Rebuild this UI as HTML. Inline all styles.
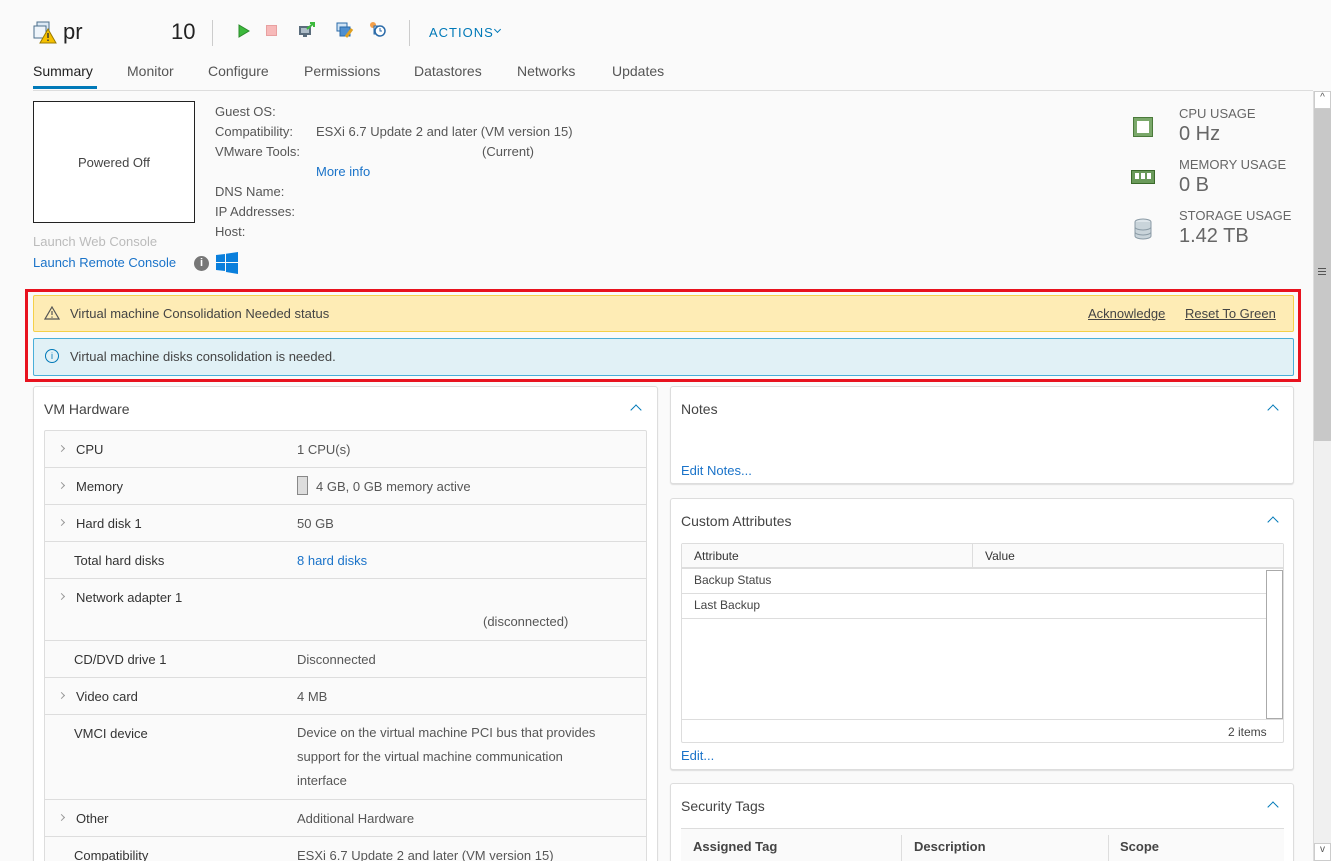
<!DOCTYPE html>
<html style="overflow:hidden;height:861px"><head><meta charset="utf-8"><style>
*{box-sizing:border-box;margin:0;padding:0}
body{width:1331px;height:861px;overflow:hidden;background:#fafafa;font-family:"Liberation Sans",sans-serif;font-size:13px;color:#565656;position:relative}
.a{position:absolute;white-space:nowrap}
.link{color:#1a73c9 !important}
.card{position:absolute;background:#fff;border:1px solid #ddd;border-radius:3px;box-shadow:0 1px 1px #ddd}
.ttl{position:absolute;left:10px;font-size:14px;color:#444}
.chev{position:absolute;width:8px;height:8px;border-left:1.5px solid #0079b8;border-top:1.5px solid #0079b8;transform:rotate(45deg)}
.row{position:absolute;left:0;right:0;border-bottom:1px solid #ddd}
.row .k{position:absolute;left:29px;top:11px;color:#333}
.row .v{position:absolute;left:252px;top:11px;color:#565656}
.row .x{position:absolute;left:14px;top:15px;width:5px;height:5px;border-right:1px solid #999;border-top:1px solid #999;transform:rotate(45deg)}
.tab{position:absolute;top:63px;font-size:14px;color:#555}
</style></head><body>
<svg class="a" style="left:33px;top:20px" width="24" height="24" viewBox="0 0 24 24"><rect x="4" y="2" width="12" height="10" fill="#dce9f5" stroke="#4c6f8c"/><rect x="1" y="6" width="12" height="12" fill="#eef4fa" stroke="#4c6f8c"/><path d="M15 9 L23 23 H7 Z" fill="#f5c000" stroke="#9a7b00"/><rect x="14.3" y="13" width="1.4" height="5" fill="#333"/><rect x="14.3" y="19.5" width="1.4" height="1.5" fill="#333"/></svg>
<div class="a" style="left:63px;top:19px;font-size:22px;color:#222">pr</div>
<div class="a" style="left:171px;top:19px;font-size:22px;color:#222">10</div>
<div class="a" style="left:212px;top:20px;width:1px;height:26px;background:#ccc"></div>
<svg class="a" style="left:238px;top:24px" width="12" height="14"><path d="M1 1 L11 7 L1 13Z" fill="#3cb93c" stroke="#2a8a2a"/></svg>
<div class="a" style="left:266px;top:25px;width:11px;height:11px;background:#f7b9b9;border:1px solid #e8a0a0"></div>
<svg class="a" style="left:298px;top:22px" width="18" height="16"><rect x="1" y="4" width="12" height="9" fill="#5a6c7c"/><rect x="3" y="6" width="8" height="5" fill="#aebcc8"/><path d="M9 7 L16 1 M12 1 H16 V5" stroke="#3cb93c" stroke-width="2" fill="none"/><rect x="5" y="13" width="4" height="2" fill="#5a6c7c"/></svg>
<svg class="a" style="left:336px;top:22px" width="18" height="17"><rect x="1" y="1" width="10" height="8" fill="#cfe3f5" stroke="#2a6aa8"/><rect x="4" y="5" width="10" height="9" fill="#4f8fcf" stroke="#2a6aa8"/><path d="M10 15 L16 7" stroke="#e0a020" stroke-width="3"/></svg>
<svg class="a" style="left:369px;top:21px" width="18" height="17"><circle cx="4" cy="4" r="3" fill="#f5a04a"/><rect x="5" y="5" width="8" height="8" fill="#cfe3f5" stroke="#2a6aa8"/><circle cx="11" cy="10" r="5" fill="#fff" stroke="#2a6aa8" stroke-width="1.5"/><path d="M11 7 V10 H13" stroke="#2a6aa8" fill="none"/></svg>
<div class="a" style="left:409px;top:20px;width:1px;height:26px;background:#ccc"></div>
<div class="a" style="left:429px;top:25px;font-size:13px;letter-spacing:1px;color:#0079b8">ACTIONS</div>
<div class="a" style="left:495px;top:27px;width:5px;height:5px;border-right:1.5px solid #0079b8;border-bottom:1.5px solid #0079b8;transform:rotate(45deg)"></div>
<div class="tab" style="left:33px;color:#222">Summary</div>
<div class="a" style="left:33px;top:86px;width:64px;height:3px;background:#0079b8"></div>
<div class="tab" style="left:127px">Monitor</div>
<div class="tab" style="left:208px">Configure</div>
<div class="tab" style="left:304px">Permissions</div>
<div class="tab" style="left:414px">Datastores</div>
<div class="tab" style="left:517px">Networks</div>
<div class="tab" style="left:612px">Updates</div>
<div class="a" style="left:33px;top:90px;width:1280px;height:1px;background:#ddd"></div>
<div class="a" style="left:1313px;top:91px;width:18px;height:770px;background:#f0f0f0;border-left:1px solid #ddd"></div>
<div class="a" style="left:1314px;top:109px;width:17px;height:332px;background:#c8c8c8"></div>
<div class="a" style="left:1314px;top:91px;width:17px;height:18px;background:#fff;border:1px solid #ccc;text-align:center;font-size:10px">^</div>
<div class="a" style="left:1314px;top:843px;width:17px;height:18px;background:#fff;border:1px solid #ccc;text-align:center;font-size:10px">v</div>
<div class="a" style="left:1318px;top:268px;width:8px;height:1px;background:#555;box-shadow:0 3px #555,0 6px #555"></div>
<div class="a" style="left:33px;top:101px;width:162px;height:122px;border:1px solid #222;background:#fff"></div>
<div class="a" style="left:33px;top:155px;width:162px;text-align:center;color:#444">Powered Off</div>
<div class="a" style="left:33px;top:234px;color:#bbb">Launch Web Console</div>
<div class="a link" style="left:33px;top:255px">Launch Remote Console</div>
<div class="a" style="left:194px;top:256px;width:15px;height:15px;border-radius:50%;background:#777;color:#fff;font-size:11px;font-weight:bold;text-align:center;line-height:15px">i</div>
<svg class="a" style="left:216px;top:252px" width="22" height="22"><path d="M0 3 L9 2 V10 H0Z M10 1.8 L22 0 V10 H10Z M0 11 H9 V19 L0 18Z M10 11 H22 V22 L10 20Z" fill="#0a7fdc"/></svg>
<div class="a" style="left:215px;top:104px">Guest OS:</div>
<div class="a" style="left:215px;top:124px">Compatibility:</div>
<div class="a" style="left:316px;top:124px">ESXi 6.7 Update 2 and later (VM version 15)</div>
<div class="a" style="left:215px;top:144px">VMware Tools:</div>
<div class="a" style="left:482px;top:144px">(Current)</div>
<div class="a link" style="left:316px;top:164px">More info</div>
<div class="a" style="left:215px;top:184px">DNS Name:</div>
<div class="a" style="left:215px;top:204px">IP Addresses:</div>
<div class="a" style="left:215px;top:224px">Host:</div>
<div class="a" style="left:1133px;top:117px;width:20px;height:20px;background:#7aa86a;border:1px solid #4a7a3a"></div>
<div class="a" style="left:1137px;top:121px;width:12px;height:12px;background:#fff"></div>
<div class="a" style="left:1131px;top:170px;width:24px;height:14px;background:#6a9a5a;border:1px solid #3a6a2a"></div>
<div class="a" style="left:1135px;top:173px;width:4px;height:6px;background:#fff;box-shadow:6px 0 #fff,12px 0 #fff"></div>
<svg class="a" style="left:1133px;top:218px" width="20" height="22"><ellipse cx="10" cy="4" rx="8" ry="3" fill="#dde5ea" stroke="#8a9aa5"/><path d="M2 4 V18 A8 3 0 0 0 18 18 V4" fill="#c9d4da" stroke="#8a9aa5"/><path d="M2 9 A8 3 0 0 0 18 9 M2 14 A8 3 0 0 0 18 14" fill="none" stroke="#8a9aa5"/></svg>
<div class="a" style="left:1179px;top:106px;color:#666">CPU USAGE</div>
<div class="a" style="left:1179px;top:123px;font-size:20px;color:#666">0 Hz</div>
<div class="a" style="left:1179px;top:157px;color:#666">MEMORY USAGE</div>
<div class="a" style="left:1179px;top:174px;font-size:20px;color:#666">0 B</div>
<div class="a" style="left:1179px;top:208px;color:#666">STORAGE USAGE</div>
<div class="a" style="left:1179px;top:225px;font-size:20px;color:#666">1.42 TB</div>
<div class="a" style="left:25px;top:289px;width:1276px;height:93px;border:3px solid #e8121f"></div>
<div class="a" style="left:33px;top:295px;width:1261px;height:37px;background:#feecb5;border:1px solid #f5d04a;border-radius:2px"></div>
<svg class="a" style="left:44px;top:306px" width="16" height="14"><path d="M8 1 L15 13 H1Z" fill="none" stroke="#555" stroke-width="1.2"/><path d="M8 5 V9 M8 10.5 V11.8" stroke="#555" stroke-width="1.2"/></svg>
<div class="a" style="left:70px;top:306px;color:#444">Virtual machine Consolidation Needed status</div>
<div class="a" style="left:1088px;top:306px;color:#444;text-decoration:underline">Acknowledge</div>
<div class="a" style="left:1185px;top:306px;color:#444;text-decoration:underline">Reset To Green</div>
<div class="a" style="left:33px;top:338px;width:1261px;height:38px;background:#e1f1f6;border:1px solid #49afd9;border-radius:2px"></div>
<div class="a" style="left:45px;top:349px;width:14px;height:14px;border:1.3px solid #0079b8;border-radius:50%;color:#0079b8;font-size:9px;text-align:center;line-height:12px">i</div>
<div class="a" style="left:70px;top:349px;color:#444">Virtual machine disks consolidation is needed.</div>
<div class="card" style="left:33px;top:386px;width:625px;height:480px">
 <div class="ttl" style="top:14px">VM Hardware</div>
 <div class="chev" style="left:598px;top:19px"></div>
 <div class="a" style="left:10px;top:43px;width:603px;height:440px;background:#fafafa;border:1px solid #ddd;border-radius:2px">
  <div class="row" style="top:0;height:37px"><i class="x"></i><span class="k a" style="left:31px">CPU</span><span class="v">1 CPU(s)</span></div>
  <div class="row" style="top:37px;height:37px"><i class="x"></i><span class="k a" style="left:31px">Memory</span><span class="a" style="left:252px;top:8px;width:11px;height:19px;background:#ddd;border:1px solid #888"></span><span class="v" style="left:271px">4 GB, 0 GB memory active</span></div>
  <div class="row" style="top:74px;height:37px"><i class="x"></i><span class="k a" style="left:31px">Hard disk 1</span><span class="v">50 GB</span></div>
  <div class="row" style="top:111px;height:37px"><span class="k">Total hard disks</span><span class="v link">8 hard disks</span></div>
  <div class="row" style="top:148px;height:62px"><i class="x"></i><span class="k a" style="left:31px">Network adapter 1</span><span class="a" style="left:438px;top:35px">(disconnected)</span></div>
  <div class="row" style="top:210px;height:37px"><span class="k">CD/DVD drive 1</span><span class="v">Disconnected</span></div>
  <div class="row" style="top:247px;height:37px"><i class="x"></i><span class="k a" style="left:31px">Video card</span><span class="v">4 MB</span></div>
  <div class="row" style="top:284px;height:85px"><span class="k">VMCI device</span><span class="v" style="line-height:24px;top:6px">Device on the virtual machine PCI bus that provides<br>support for the virtual machine communication<br>interface</span></div>
  <div class="row" style="top:369px;height:37px"><i class="x"></i><span class="k a" style="left:31px">Other</span><span class="v">Additional Hardware</span></div>
  <div class="row" style="top:406px;height:37px"><span class="k">Compatibility</span><span class="v">ESXi 6.7 Update 2 and later (VM version 15)</span></div>
 </div>
</div>
<div class="card" style="left:670px;top:386px;width:624px;height:98px">
 <div class="ttl" style="top:14px">Notes</div>
 <div class="chev" style="left:598px;top:19px"></div>
 <div class="a link" style="left:10px;top:76px">Edit Notes...</div>
</div>
<div class="card" style="left:670px;top:498px;width:624px;height:272px">
 <div class="ttl" style="top:14px">Custom Attributes</div>
 <div class="chev" style="left:598px;top:19px"></div>
 <div class="a" style="left:10px;top:44px;width:603px;height:200px;border:1px solid #ddd;border-radius:2px;background:#fff;font-size:12px">
  <div class="a" style="left:0;top:0;width:601px;height:25px;background:#fafafa;border-bottom:2px solid #ddd"></div>
  <div class="a" style="left:290px;top:0;width:1px;height:24px;background:#ddd"></div>
  <div class="a" style="left:12px;top:5px;color:#333">Attribute</div>
  <div class="a" style="left:303px;top:5px;color:#333">Value</div>
  <div class="a" style="left:12px;top:29px;color:#444">Backup Status</div>
  <div class="a" style="left:0;top:49px;width:584px;height:1px;background:#ddd"></div>
  <div class="a" style="left:12px;top:54px;color:#444">Last Backup</div>
  <div class="a" style="left:0;top:74px;width:584px;height:1px;background:#ddd"></div>
  <div class="a" style="left:584px;top:26px;width:17px;height:149px;border:1px solid #aaa;background:#fff"></div>
  <div class="a" style="left:0;top:175px;width:601px;height:1px;background:#ddd"></div>
  <div class="a" style="left:546px;top:181px;color:#444">2 items</div>
 </div>
 <div class="a link" style="left:10px;top:249px">Edit...</div>
</div>
<div class="card" style="left:670px;top:783px;width:624px;height:90px">
 <div class="ttl" style="top:14px">Security Tags</div>
 <div class="chev" style="left:598px;top:19px"></div>
 <div class="a" style="left:10px;top:44px;width:603px;height:50px;border-top:1px solid #ddd;background:#fafafa;font-weight:bold;color:#444">
  <div class="a" style="left:12px;top:10px">Assigned Tag</div>
  <div class="a" style="left:220px;top:6px;width:1px;height:30px;background:#ddd"></div>
  <div class="a" style="left:233px;top:10px">Description</div>
  <div class="a" style="left:427px;top:6px;width:1px;height:30px;background:#ddd"></div>
  <div class="a" style="left:439px;top:10px">Scope</div>
 </div>
</div>
</body></html>
